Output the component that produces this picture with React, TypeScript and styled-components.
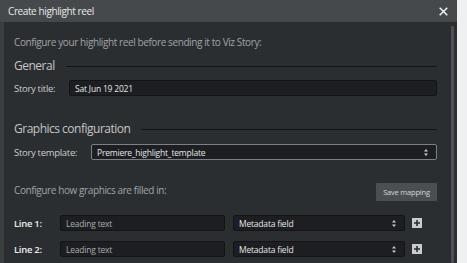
import React from "react";
import styled, { createGlobalStyle } from "styled-components";

const Global = createGlobalStyle`
  html, body { margin: 0; padding: 0; background: #eef0f1; }
  body { font-family: "Open Sans", "Liberation Sans", sans-serif; overflow: hidden; }
  * { box-sizing: border-box; }
`;

const Dialog = styled.div`
  width: 457px;
  height: 263px;
  display: flex;
  flex-direction: column;
  background: #2b2e31;
  overflow: hidden;
`;

const TitleBar = styled.div`
  height: 22px;
  flex: none;
  display: flex;
  align-items: center;
  justify-content: space-between;
  padding: 0 9px 0 8px;
  background: #46494c;
  color: #e8e9ea;
  font-size: 10px;
  letter-spacing: -0.4px;
`;

const CloseIcon = styled.svg`
  width: 9px;
  height: 9px;
  flex: none;
`;

const Body = styled.div`
  flex: 1;
  display: flex;
  border-left: 4px solid #3b3e41;
  min-height: 0;
`;

const Content = styled.div`
  flex: 1;
  padding: 13px 10px 0 10px;
  display: flex;
  flex-direction: column;
`;

const ScrollTrack = styled.div`
  width: 10px;
  flex: none;
  display: flex;
  justify-content: center;
  padding-top: 4px;
`;

const ScrollThumb = styled.div`
  width: 3px;
  background: #4d5054;
  border-radius: 1px;
`;

const Note = styled.div<{ $mt?: number }>`
  color: #a0a3a6;
  font-size: 10px;
  letter-spacing: -0.4px;
  line-height: 14px;
  margin-top: ${(p) => p.$mt ?? 0}px;
`;

const Heading = styled.div<{ $mt: number }>`
  display: flex;
  align-items: center;
  gap: 11px;
  margin-top: ${(p) => p.$mt}px;
  color: #c3c5c7;
  font-size: 12px;
  letter-spacing: -0.5px;
  line-height: 16px;
  &::after {
    content: "";
    flex: 1;
    height: 1px;
    background: #131517;
  }
`;

const Row = styled.div<{ $mt: number }>`
  display: flex;
  align-items: center;
  margin-top: ${(p) => p.$mt}px;
`;

const Label = styled.span<{ $w: number; $strong?: boolean }>`
  width: ${(p) => p.$w}px;
  flex: none;
  color: ${(p) => (p.$strong ? "#eceeef" : "#c9cbcd")};
  font-size: 9.5px;
  letter-spacing: -0.3px;
  font-weight: ${(p) => (p.$strong ? 600 : 400)};
`;

const Field = styled.div<{ $w?: number; $light?: boolean }>`
  height: 16px;
  ${(p) => (p.$w ? `width: ${p.$w}px; flex: none;` : "flex: 1;")}
  display: flex;
  align-items: center;
  justify-content: space-between;
  padding: 0 8px 0 5px;
  background: #1c1e21;
  border: 1px solid ${(p) => (p.$light ? "#7d8084" : "#121416")};
  border-radius: 2px;
  color: #e4e5e6;
  font-size: 8.5px;
  letter-spacing: -0.2px;
`;

const Placeholder = styled.span`
  color: #a9acaf;
`;

const Arrows = styled.svg`
  width: 4px;
  height: 7px;
  flex: none;
`;

const Button = styled.button`
  height: 18px;
  width: 61px;
  padding: 0;
  border: none;
  background: #4b4e52;
  color: #d4d6d8;
  font-family: inherit;
  font-size: 7.5px;
  letter-spacing: -0.2px;
  border-radius: 1px;
`;

const PlusBox = styled.svg`
  width: 10px;
  height: 10px;
  flex: none;
  margin-left: 7px;
`;

const SpaceRow = styled.div<{ $mt: number }>`
  display: flex;
  align-items: flex-start;
  justify-content: space-between;
  margin-top: ${(p) => p.$mt}px;
`;

const Gap = styled.div<{ $w: number }>`
  width: ${(p) => p.$w}px;
  flex: none;
`;

const UpDown = () => (
  <Arrows viewBox="0 0 4 7">
    <path d="M2 0 L4 2.5 H0 Z M2 7 L4 4.5 H0 Z" fill="#c8cacc" />
  </Arrows>
);

const Plus = () => (
  <PlusBox viewBox="0 0 10 10">
    <rect x="0" y="0" width="10" height="10" fill="#c9cbcd" />
    <path d="M5 2 V8 M2 5 H8" stroke="#2b2e31" strokeWidth="1.6" />
  </PlusBox>
);

const LineRow = ({ n, mt }: { n: number; mt: number }) => (
  <Row $mt={mt}>
    <Label $w={46} $strong>
      Line {n}:
    </Label>
    <Field $w={165}>
      <Placeholder>Leading text</Placeholder>
    </Field>
    <Gap $w={8} />
    <Field $w={172}>
      <span>Metadata field</span>
      <UpDown />
    </Field>
    <Plus />
  </Row>
);

export default function App() {
  return (
    <>
      <Global />
      <Dialog>
        <TitleBar>
          <span>Create highlight reel</span>
          <CloseIcon viewBox="0 0 9 9">
            <path d="M0.7 0.7 L8.3 8.3 M8.3 0.7 L0.7 8.3" stroke="#f2f3f4" strokeWidth="1.5" />
          </CloseIcon>
        </TitleBar>
        <Body>
          <Content>
            <Note>Configure your highlight reel before sending it to Viz Story:</Note>
            <Heading $mt={9}>General</Heading>
            <Row $mt={6}>
              <Label $w={55}>Story title:</Label>
              <Field>Sat Jun 19 2021</Field>
            </Row>
            <Heading $mt={25}>Graphics configuration</Heading>
            <Row $mt={7}>
              <Label $w={77}>Story template:</Label>
              <Field $light>
                <span>Premiere_highlight_template</span>
                <UpDown />
              </Field>
            </Row>
            <SpaceRow $mt={23}>
              <Note>Configure how graphics are filled in:</Note>
              <Button>Save mapping</Button>
            </SpaceRow>
            <LineRow n={1} mt={14} />
            <LineRow n={2} mt={10} />
          </Content>
          <ScrollTrack>
            <ScrollThumb />
          </ScrollTrack>
        </Body>
      </Dialog>
    </>
  );
}
